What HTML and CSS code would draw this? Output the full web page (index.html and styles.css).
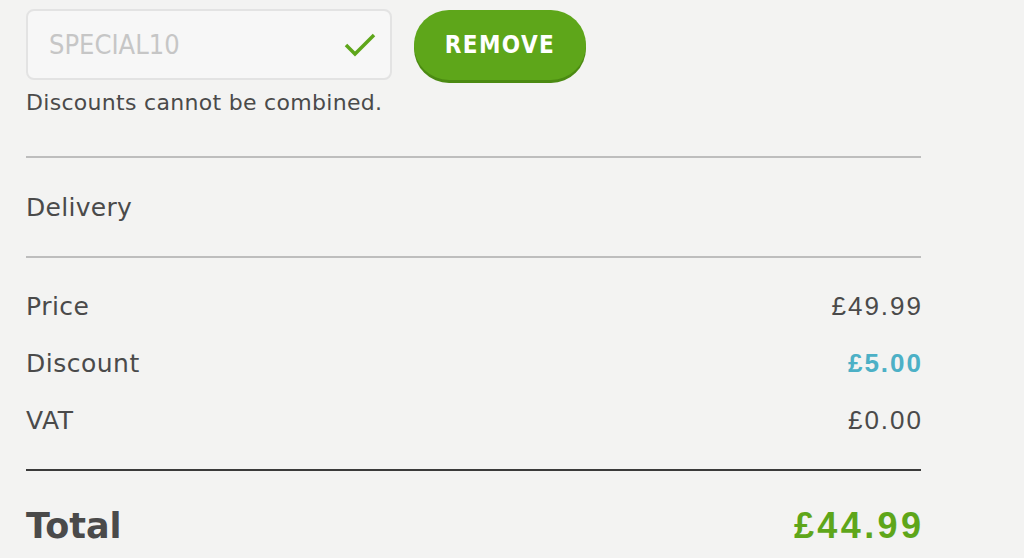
FILE: index.html
```html
<!DOCTYPE html>
<html lang="en">
<head>
    <meta charset="UTF-8">
    <meta name="viewport" content="width=device-width, initial-scale=1.0">
    <title>Basket summary</title>
    <link rel="stylesheet" href="styles.css">
</head>
<body>
    <main class="summary">
        <div class="coupon">
            <div class="coupon-field">
                <span class="coupon-code">SPECIAL10</span>
                <svg class="coupon-check" width="32" height="24" viewBox="0 0 32 24">
                    <path d="M2 12 L11 21 L30 2" fill="none" stroke="#5ea61a" stroke-width="3.5"/>
                </svg>
            </div>
            <button class="btn-remove">REMOVE</button>
        </div>
        <p class="note">Discounts cannot be combined.</p>

        <div class="delivery">Delivery</div>

        <div class="rows">
            <div class="row">
                <span class="label">Price</span>
                <span class="amount">£49.99</span>
            </div>
            <div class="row">
                <span class="label">Discount</span>
                <span class="amount discount">£5.00</span>
            </div>
            <div class="row">
                <span class="label">VAT</span>
                <span class="amount">£0.00</span>
            </div>
        </div>

        <div class="total">
            <span class="total-label">Total</span>
            <span class="total-amount">£44.99</span>
        </div>
    </main>
</body>
</html>
```

FILE: styles.css
```css
* {
    margin: 0;
    padding: 0;
    box-sizing: border-box;
}
body {
    font-family: "DejaVu Sans", Arial, sans-serif;
    background-color: #f3f3f2;
    color: #4a4a4a;
    overflow: hidden;
}
.summary {
    width: 921px;
    padding: 9px 0 0 26px;
}
.coupon {
    display: flex;
    gap: 22px;
    align-items: flex-start;
}
.coupon-field {
    width: 366px;
    height: 71px;
    border: 2px solid #e3e3e3;
    border-radius: 8px;
    background-color: #f7f7f7;
    display: flex;
    align-items: center;
    justify-content: space-between;
    padding: 0 14px 0 21px;
}
.coupon-code {
    font-family: "DejaVu Sans Condensed", "DejaVu Sans", sans-serif;
    font-size: 27px;
    color: #c6c6c6;
}
.btn-remove {
    width: 172px;
    height: 70px;
    margin-top: 1px;
    border: none;
    border-radius: 36px;
    background-color: #5ea61a;
    box-shadow: 0 3px 0 #4b8a12;
    color: #ffffff;
    font-family: "DejaVu Sans Condensed", "DejaVu Sans", sans-serif;
    font-weight: 700;
    font-size: 24px;
    letter-spacing: 1.4px;
}
.note {
    margin-top: 10px;
    font-size: 22px;
    letter-spacing: 0.3px;
    line-height: 26px;
    height: 66px;
}
.delivery {
    height: 102px;
    border-top: 2px solid #bdbdbd;
    border-bottom: 2px solid #bdbdbd;
    display: flex;
    align-items: center;
    font-size: 25px;
    letter-spacing: 0.3px;
}
.rows {
    padding: 20px 0 20px;
    border-bottom: 2px solid #3a3a3a;
}
.row {
    height: 57px;
    display: flex;
    align-items: center;
    justify-content: space-between;
    font-size: 25px;
    letter-spacing: 0.5px;
}
.amount {
    font-family: "Liberation Sans", Arial, sans-serif;
    font-size: 26px;
    letter-spacing: 2px;
    margin-right: -2px;
}
.amount.discount {
    color: #4cb0c6;
    font-weight: 700;
}
.total {
    height: 110px;
    display: flex;
    align-items: center;
    justify-content: space-between;
}
.total-label {
    font-size: 35px;
    font-weight: 700;
}
.total-amount {
    font-family: "Liberation Sans", Arial, sans-serif;
    font-size: 36px;
    font-weight: 700;
    letter-spacing: 3.4px;
    margin-right: -3.4px;
    color: #5ea61a;
}
```
